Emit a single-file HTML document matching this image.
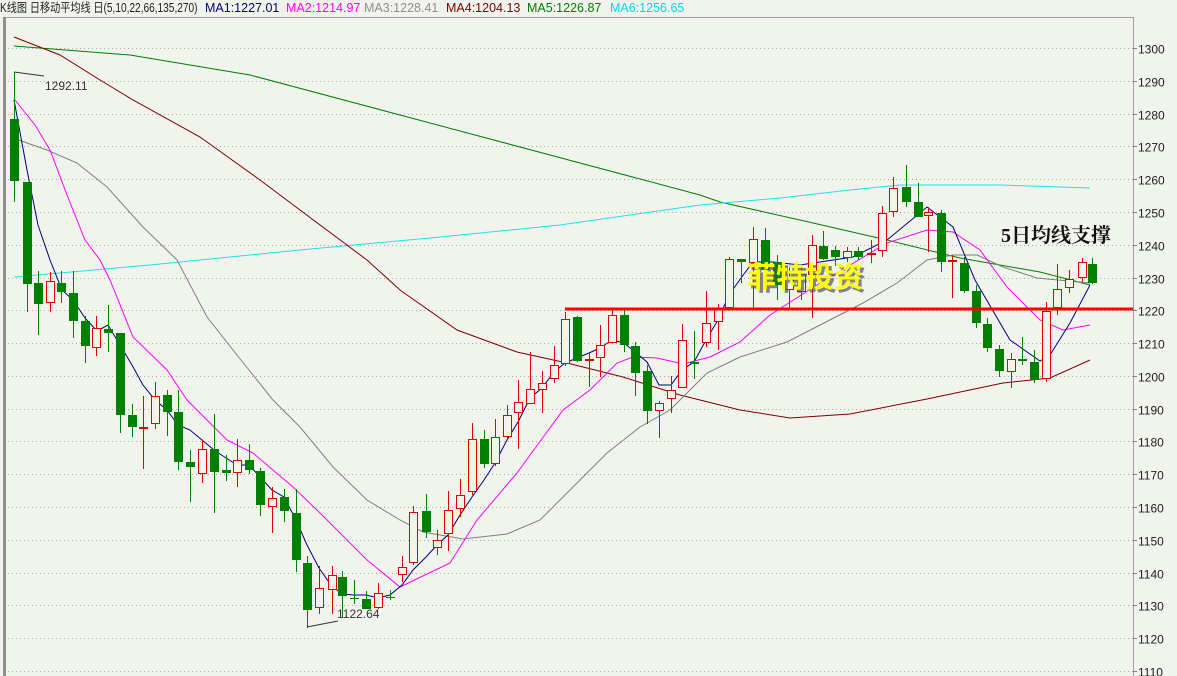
<!DOCTYPE html>
<html><head><meta charset="utf-8">
<style>
html,body{margin:0;padding:0;background:#f0f4ec;width:1177px;height:676px;overflow:hidden;font-family:"Liberation Sans","Noto Sans CJK SC",sans-serif}
#hdr{position:absolute;left:0;top:0;height:16px;font-size:12.5px;line-height:16px;white-space:nowrap;color:#222}
#hdr span{position:absolute;top:0}
svg{position:absolute;left:0;top:0}
</style></head><body>
<svg id="c" width="1177" height="676" xmlns="http://www.w3.org/2000/svg">
<rect x="0" y="0" width="1177" height="676" fill="#f0f4ec"/>
<rect x="3" y="17" width="3" height="659" fill="#909090"/>
<line x1="1133.5" y1="17" x2="1133.5" y2="676" stroke="#a0a0a0"/>
<line x1="6" y1="17.5" x2="1133" y2="17.5" stroke="#a0a0a0"/>
<g id="grid"></g>
<g id="lines"></g>
<g id="cand"></g>
<line x1="565" y1="309" x2="1133" y2="309" stroke="#ff0000" stroke-width="3"/>
<polyline points="14,72 44,76" fill="none" stroke="#333" stroke-width="1"/>
<polyline points="307,627 338,621" fill="none" stroke="#333" stroke-width="1"/>
<text x="45" y="90" font-size="12" fill="#333" font-family="Liberation Sans,sans-serif">1292.11</text>
<text x="337" y="618" font-size="12" fill="#333" font-family="Liberation Sans,sans-serif">1122.64</text>
<text x="750" y="290" font-size="29" font-weight="bold" fill="#555" font-family="Liberation Sans,Noto Sans CJK SC,sans-serif" opacity="0.7">菲特投资</text>
<text x="747" y="287" font-size="29" font-weight="bold" fill="#ffff00" font-family="Liberation Sans,Noto Sans CJK SC,sans-serif">菲特投资</text>
<text x="1001" y="242" font-size="20" font-weight="bold" fill="#111" font-family="Liberation Serif,Noto Serif CJK SC,serif">5日均线支撑</text>
</svg>
<div id="hdr">
<span style="left:0;transform:scaleX(0.81);transform-origin:0 0">K线图 日移动平均线 日(5,10,22,66,135,270)</span>
<span style="left:205px;color:#000080">MA1:1227.01</span>
<span style="left:286px;color:#ff00ff">MA2:1214.97</span>
<span style="left:364px;color:#909090">MA3:1228.41</span>
<span style="left:446px;color:#800000">MA4:1204.13</span>
<span style="left:527px;color:#008000">MA5:1226.87</span>
<span style="left:610px;color:#00d8e8">MA6:1256.65</span>
</div>
<script>
var NS="http://www.w3.org/2000/svg";
function el(t,a,p){var e=document.createElementNS(NS,t);for(var k in a)e.setAttribute(k,a[k]);p.appendChild(e);return e;}
var svg=document.getElementById('c');
var grid=document.getElementById('grid');
for(var p=1300;p>=1110;p-=10){
 var y=Math.round(48+(1300-p)*3.279)+0.5;
 el('line',{x1:8,y1:y,x2:1133,y2:y,stroke:'#a8a8a8','stroke-dasharray':'1,3'},grid);
 el('line',{x1:1133,y1:y,x2:1137,y2:y,stroke:'#808080'},grid);
 var t=el('text',{x:1138,y:y+5,'font-size':12,fill:'#222','font-family':'Liberation Sans,sans-serif'},svg);
 t.textContent=p;
}
var L=document.getElementById('lines');
function pl(pts,c,w){el('polyline',{points:pts,fill:'none',stroke:c,'stroke-width':w||1},L);}
pl("14,46 130,55 250,75 400,115 550,155 700,195 720,202 800,220 887,240 960,258 1040,272 1090,285","#008000");
pl("14,277 150,265 300,250 430,238 560,225 700,205 780,198 850,190 900,185 1000,185 1090,188","#20e0f0");
pl("14,37 60,55 100,80 133,100 200,137 260,180 300,210 367,260 400,290 457,330 517,352 567,363 623,377 680,395 740,410 790,418 850,414 927,399 1003,383 1050,378 1090,360","#800000");
pl("13,138 47,150 77,163 107,187 143,227 177,260 207,317 233,350 273,400 300,427 333,467 367,500 400,520 423,532 463,539 507,534 540,520 567,493 607,453 640,427 670,410 707,373 740,357 787,342 863,303 897,283 927,260 953,255 977,255 1003,267 1037,278 1090,283","#808080");
pl("15,100 35,125 50,150 67,195 85,240 100,260 110,280 133,337 167,370 187,400 227,440 253,453 293,487 320,513 367,560 400,587 450,563 477,520 517,473 563,410 590,390 617,363 633,357 657,358 683,364 710,357 740,342 770,315 820,283 887,243 927,230 953,232 980,250 1007,287 1040,320 1063,330 1090,325","#ff00ff");
pl("14,100 27,170 38,225 50,260 62,290 73,300 85,318 97,331 108,325 120,345 132,365 143,385 155,400 167,410 178,425 190,430 202,440 214,450 226,458 237,465 249,465 261,478 272,490 284,497 296,520 307,545 319,568 331,585 342,594 354,595 366,595 378,598 390,595 402,585 413,570 426,557 437,545 448,535 460,515 472,497 484,480 495,463 507,440 518,422 530,398 542,388 554,372 565,363 577,358 589,353 600,348 612,340 624,343 635,352 647,362 659,385 671,385 682,370 694,362 706,340 718,320 729,295 741,278 753,262 773,262 800,265 853,257 887,240 927,207 953,227 975,280 1010,340 1040,361 1050,355 1070,323 1090,285","#000080");
var D=[
[14,119,181,72,202,'g'],[27,182,284,182,312,'g'],[38,283,304,271,335,'g'],[50,281,303,272,312,'r'],[61,283,292,271,303,'g'],
[73,293,321,271,338,'g'],[85,321,346,316,363,'g'],[96,328,348,316,356,'r'],[108,329,333,305,352,'g'],[120,333,415,333,433,'g'],
[132,415,427,404,437,'g'],[143,427,428,396,469,'r'],[155,396,424,382,429,'r'],[167,395,412,390,436,'g'],[178,412,462,390,470,'g'],
[190,462,467,450,502,'g'],[202,449,474,440,483,'r'],[214,449,472,414,513,'g'],[226,470,473,455,481,'g'],[237,460,473,439,487,'r'],
[249,460,470,444,474,'g'],[260,471,505,468,516,'g'],[272,498,507,487,533,'r'],[284,497,511,489,522,'g'],[296,513,560,489,572,'g'],
[307,563,610,556,628,'g'],[319,588,608,566,614,'r'],[332,575,590,566,614,'r'],[342,577,596,571,618,'g'],[354,598,599,580,604,'g'],
[366,599,609,591,609,'g'],[378,593,608,583,609,'r'],[390,597,598,590,600,'g'],
[402,567,575,556,582,'r'],[413,512,563,506,565,'r'],[426,511,532,494,538,'g'],[437,540,548,530,555,'r'],[448,510,534,491,551,'r'],
[460,495,509,479,517,'r'],[472,439,492,423,495,'r'],[484,439,464,430,468,'g'],[495,437,464,419,466,'r'],[507,415,437,405,438,'r'],
[518,402,413,380,449,'r'],[530,389,404,352,404,'r'],[542,383,390,371,413,'r'],[554,365,379,346,383,'r'],[565,319,364,312,366,'r'],
[577,317,361,316,362,'g'],[589,359,361,353,387,'r'],[600,345,358,325,377,'r'],[612,315,343,310,343,'r'],[624,315,345,308,352,'g'],
[635,346,373,342,396,'g'],[647,371,411,365,424,'g'],[659,403,411,401,438,'r'],[671,390,399,376,413,'r'],[682,340,388,324,388,'r'],
[694,362,364,331,379,'g'],[706,323,343,291,347,'r'],[718,308,322,304,350,'r'],[729,259,308,257,309,'r'],[741,259,262,259,283,'g'],
[753,239,263,227,310,'r'],[765,240,270,228,282,'g'],[777,262,285,255,300,'g'],[789,278,290,265,310,'r'],[801,274,292,266,300,'r'],
[812,245,275,235,318,'r'],[823,246,259,231,260,'g'],[835,250,257,246,266,'g'],[847,251,258,247,262,'r'],[858,251,257,247,260,'g'],
[871,253,255,240,263,'r'],[882,213,251,206,257,'r'],[893,188,212,177,217,'r'],[906,187,202,165,207,'g'],[918,202,217,183,217,'g'],
[928,212,216,207,252,'r'],[941,213,262,210,272,'g'],[952,260,261,255,298,'r'],[964,263,291,257,293,'g'],[976,291,323,285,328,'g'],
[987,324,348,318,352,'g'],[999,349,371,345,377,'g'],[1011,359,372,353,388,'r'],[1022,359,361,337,365,'g'],[1034,362,380,350,383,'g'],
[1046,311,379,302,382,'r'],[1057,289,308,264,315,'r'],[1069,279,288,270,293,'r'],[1082,262,278,258,282,'r'],[1092,264,283,258,284,'g']
];
var C=document.getElementById('cand');
D.forEach(function(d){
 var x=d[0],col=d[5]=='g'?'#008000':'#e00000';
 var bt=d[1],bb=Math.max(d[2],d[1]+1);
 if(d[5]=='g'){
  el('line',{x1:x+0.5,y1:d[3],x2:x+0.5,y2:d[4],stroke:col},C);
  el('rect',{x:x-4,y:bt,width:9,height:bb-bt,fill:col},C);
 }else{
  el('line',{x1:x+0.5,y1:d[3],x2:x+0.5,y2:bt,stroke:col},C);
  el('line',{x1:x+0.5,y1:bb,x2:x+0.5,y2:d[4],stroke:col},C);
  el('rect',{x:x-3.5,y:bt+0.5,width:8,height:Math.max(bb-bt-1,1),fill:'#f0f4ec',stroke:col},C);
 }
});
</script>
</body></html>
